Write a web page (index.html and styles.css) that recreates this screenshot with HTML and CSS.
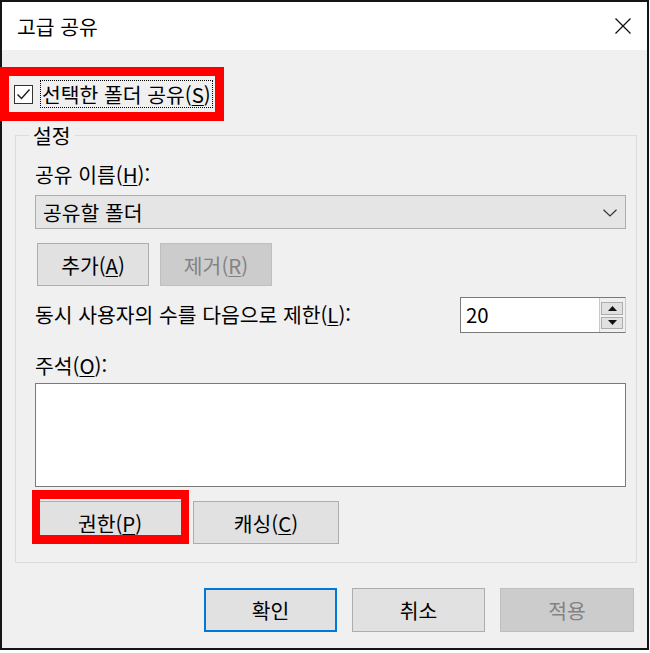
FILE: index.html
```html
<!DOCTYPE html>
<html lang="ko">
<head>
<meta charset="utf-8">
<title>고급 공유</title>
<link rel="stylesheet" href="styles.css">
</head>
<body>
<div class="window">
  <div class="titlebar">
    <span class="title">고급 공유</span>
    <svg class="close" width="16" height="16" viewBox="0 0 16 16"><path d="M0.5 0.5L15.5 15.5M15.5 0.5L0.5 15.5" stroke="#111" stroke-width="1.3" fill="none"/></svg>
  </div>
  <div class="content">
    <div class="share-row">
      <span class="checkbox"><svg width="17" height="17" viewBox="0 0 17 17"><path d="M2.5 8.5L6.5 12.5L14.5 3.5" stroke="#222" stroke-width="1.5" fill="none"/></svg></span>
      <span class="focus">선택한 폴더 공유(<u>S</u>)</span>
    </div>
    <div class="group">
      <span class="legend">설정</span>
      <div class="label">공유 이름(<u>H</u>):</div>
      <div class="select"><span>공유할 폴더</span><svg width="14" height="8" viewBox="0 0 14 8"><path d="M0.5 0.8L7 7L13.5 0.8" stroke="#333" stroke-width="1.2" fill="none"/></svg></div>
      <div class="btn-row">
        <button class="btn small">추가(<u>A</u>)</button>
        <button class="btn small disabled">제거(<u>R</u>)</button>
      </div>
      <div class="limit-row">
        <span class="limit-label">동시 사용자의 수를 다음으로 제한(<u>L</u>):</span>
        <div class="spinner">
          <span class="spin-value">20</span>
          <div class="spin-btns">
            <span class="spin-btn"><svg width="9" height="5" viewBox="0 0 9 5"><path d="M0 5L4.5 0L9 5Z" fill="#111"/></svg></span>
            <span class="spin-btn"><svg width="9" height="5" viewBox="0 0 9 5"><path d="M0 0L4.5 5L9 0Z" fill="#111"/></svg></span>
          </div>
        </div>
      </div>
      <div class="label comment-label">주석(<u>O</u>):</div>
      <div class="textarea"></div>
      <div class="btn-row row2">
        <button class="btn mid">권한(<u>P</u>)</button>
        <button class="btn mid">캐싱(<u>C</u>)</button>
      </div>
    </div>
    <div class="footer">
      <button class="btn wide default">확인</button>
      <button class="btn wide">취소</button>
      <button class="btn wide disabled apply">적용</button>
    </div>
  </div>
  <div class="highlight hl-share"></div>
  <div class="highlight hl-perm"></div>
</div>
</body>
</html>
```
FILE: styles.css
```css
* { box-sizing: border-box; }
html, body { margin: 0; padding: 0; background: #ffffff; }
body {
  font-family: "Noto Sans CJK KR", "Malgun Gothic", sans-serif;
  font-size: 20.4px;
  color: #000;
}
u { text-decoration: underline; text-underline-offset: 2px; text-decoration-thickness: 1px; }

.window {
  position: relative;
  width: 649px;
  height: 650px;
  border: 2px solid #151515;
  background: #f0f0f0;
  display: flex;
  flex-direction: column;
}

.titlebar {
  height: 48px;
  flex: none;
  background: #ffffff;
  display: flex;
  align-items: center;
  justify-content: space-between;
  padding: 0 16px 0 15px;
}
.title { line-height: 26px; }
.close { display: block; }

.content {
  flex: 1;
  display: flex;
  flex-direction: column;
}

.share-row {
  display: flex;
  align-items: center;
  margin: 30px 0 0 12px;
  height: 28px;
}
.checkbox {
  width: 19px;
  height: 19px;
  border: 1px solid #333;
  background: #fff;
  display: flex;
  align-items: center;
  justify-content: center;
}
.focus {
  margin-left: 7px;
  height: 28px;
  line-height: 26px;
  padding: 0 1px;
  border: 1px dotted #000;
}

.group {
  position: relative;
  margin: 27px 10px 0 13px;
  border: 1px solid #dcdcdc;
  padding: 25px 10px 18px 19px;
  display: flex;
  flex-direction: column;
}
.legend {
  position: absolute;
  left: 13px;
  top: -14px;
  padding: 0 4px;
  background: #f0f0f0;
  line-height: 26px;
}
.label { line-height: 26px; }

.select {
  margin-top: 8px;
  height: 34px;
  background: #e5e5e5;
  border: 1px solid #adadad;
  display: flex;
  align-items: center;
  justify-content: space-between;
  padding: 0 8px 0 7px;
  line-height: 26px;
}
.select svg { display: block; margin-top: 1px; }

.btn-row {
  display: flex;
  gap: 11px;
  margin-top: 14px;
  padding-left: 2px;
}
.btn {
  font-family: inherit;
  font-size: 20.4px;
  color: #000;
  height: 43px;
  background: #e1e1e1;
  border: 1px solid #adadad;
  border-radius: 0;
  padding: 0;
  line-height: 26px;
}
.btn.small { width: 112px; }
.btn.mid { width: 146px; }
.btn.disabled {
  background: #cccccc;
  border-color: #bfbfbf;
  color: #838383;
}
.row2 { gap: 10px; }

.limit-row {
  margin-top: 11px;
  height: 36px;
  display: flex;
  align-items: center;
  justify-content: space-between;
}
.limit-label { line-height: 26px; margin-top: -3px; }
.spinner {
  width: 166px;
  height: 36px;
  display: flex;
  background: #fff;
  border: 1px solid #7a7a7a;
  border-right-color: #c8c8c8;
}
.spin-value {
  flex: 1;
  padding-left: 5px;
  line-height: 32px;
}
.spin-btns {
  width: 26px;
  display: flex;
  flex-direction: column;
  gap: 2px;
  padding: 4px 2px 3px 1px;
  background: #f0f0f0;
  border-left: 1px solid #c8c8c8;
}
.spin-btn {
  flex: 1;
  background: #e1e1e1;
  border: 1px solid #adadad;
  display: flex;
  align-items: center;
  justify-content: center;
}
.spin-btn svg { display: block; }

.comment-label { margin-top: 19px; }
.textarea {
  margin-top: 5px;
  height: 104px;
  background: #ffffff;
  border: 1px solid #7a7a7a;
}

.footer {
  margin-top: 25px;
  display: flex;
  justify-content: flex-end;
  gap: 15px;
  padding-right: 13px;
}
.btn.wide { width: 133px; height: 44px; }
.btn.apply { width: 134px; }
.btn.default { border: 2px solid #0078d7; }

.highlight {
  position: absolute;
  border: 9px solid #ff0000;
}
.hl-share { left: -2px; top: 65px; width: 224px; height: 54px; }
.hl-perm { left: 30px; top: 488px; width: 157px; height: 54px; border-width: 9px 8px; }
```
